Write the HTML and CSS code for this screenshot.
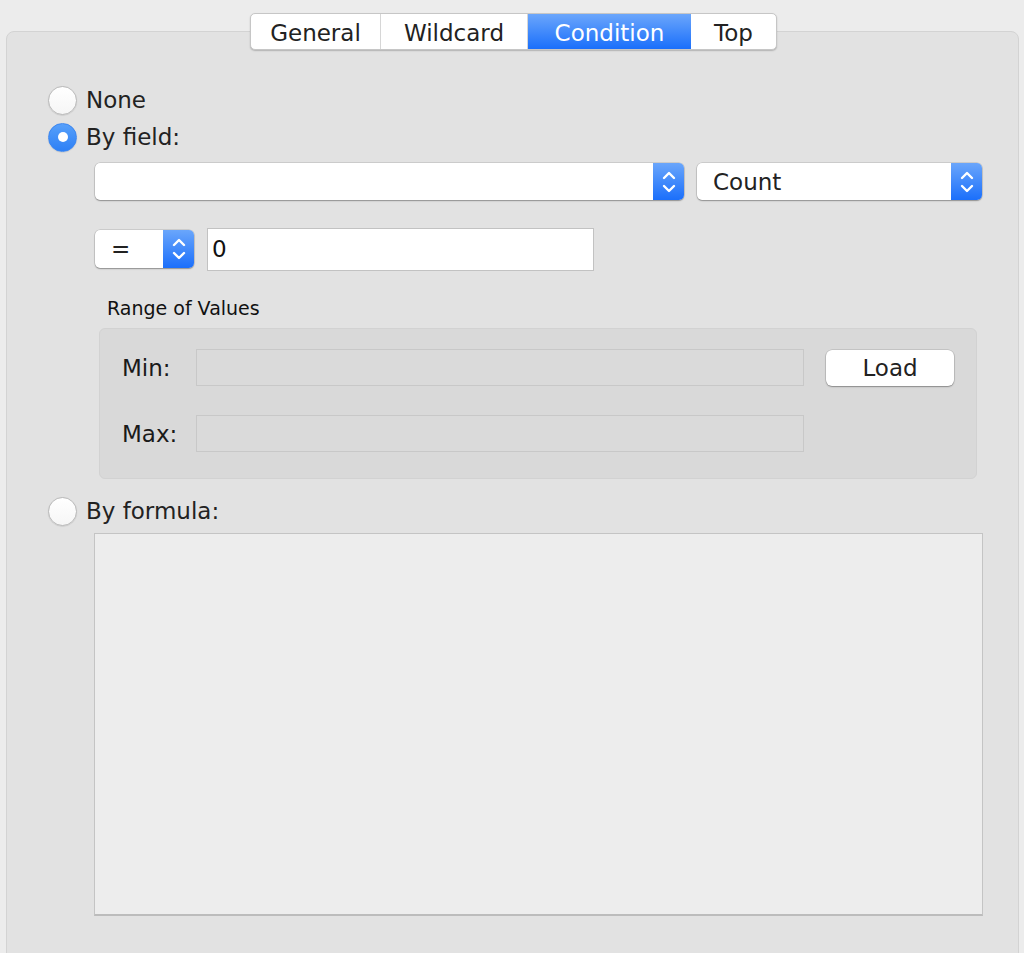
FILE: index.html
```html
<!DOCTYPE html>
<html>
<head>
<meta charset="utf-8">
<link rel="stylesheet" href="styles.css">
</head>
<body>
<div class="window">
  <div class="tabs">
    <div class="tab tab-general">General</div>
    <div class="tab tab-wildcard">Wildcard</div>
    <div class="tab tab-condition active">Condition</div>
    <div class="tab tab-top">Top</div>
  </div>
  <div class="panel">
    <div class="radio-row row-none">
      <span class="radio"></span><span class="radio-label">None</span>
    </div>
    <div class="radio-row row-field">
      <span class="radio checked"></span><span class="radio-label">By field:</span>
    </div>

    <div class="field-block">
      <div class="popup-row">
        <div class="popup popup-field">
          <span class="popup-text"></span>
          <span class="stepper"><svg width="16" height="26" viewBox="0 0 16 26"><path d="M3 9 L8 4 L13 9 M3 17 L8 22 L13 17" fill="none" stroke="#fff" stroke-width="2.4" stroke-linecap="round" stroke-linejoin="round"/></svg></span>
        </div>
        <div class="popup popup-count">
          <span class="popup-text">Count</span>
          <span class="stepper"><svg width="16" height="26" viewBox="0 0 16 26"><path d="M3 9 L8 4 L13 9 M3 17 L8 22 L13 17" fill="none" stroke="#fff" stroke-width="2.4" stroke-linecap="round" stroke-linejoin="round"/></svg></span>
        </div>
      </div>

      <div class="op-row">
        <div class="popup popup-op">
          <span class="popup-text op-text">=</span>
          <span class="stepper"><svg width="16" height="26" viewBox="0 0 16 26"><path d="M3 9 L8 4 L13 9 M3 17 L8 22 L13 17" fill="none" stroke="#fff" stroke-width="2.4" stroke-linecap="round" stroke-linejoin="round"/></svg></span>
        </div>
        <div class="textfield">0</div>
      </div>

      <div class="range-label">Range of Values</div>
      <div class="range-box">
        <div class="range-grid">
          <span class="range-name">Min:</span>
          <div class="range-field"></div>
          <div class="load-btn">Load</div>
          <span class="range-name">Max:</span>
          <div class="range-field"></div>
          <div></div>
        </div>
      </div>
    </div>

    <div class="radio-row row-formula">
      <span class="radio"></span><span class="radio-label">By formula:</span>
    </div>
    <div class="formula-area"></div>
  </div>
</div>
</body>
</html>
```

FILE: styles.css
```css
* { box-sizing: border-box; }
html, body { margin: 0; padding: 0; }
body {
  background: #ececec;
  font-family: "DejaVu Sans", "Liberation Sans", sans-serif;
  color: #222;
  width: 1024px;
  height: 953px;
  overflow: hidden;
}
.window {
  padding-top: 13px;
  padding-left: 6px;
  width: 1019px;
}
.tabs {
  position: relative;
  z-index: 2;
  display: flex;
  width: 527px;
  height: 37px;
  margin-left: 244px;
  background: #fff;
  border: 1px solid #c6c6c6;
  border-radius: 5px;
  box-shadow: 0 1px 1.5px rgba(0,0,0,0.22);
  overflow: hidden;
}
.tab {
  display: flex;
  align-items: center;
  justify-content: center;
  font-size: 23px;
  color: #222;
  border-right: 1px solid #d6d6d6;
  height: 100%;
  padding-top: 2px;
}
.tab:last-child { border-right: none; }
.tab-general { width: 130px; }
.tab-wildcard { width: 147px; }
.tab-condition { width: 163px; }
.tab-top { flex: 1; }
.tab.active {
  background: linear-gradient(#6ba6fb, #1a6ffb);
  color: #fff;
  border-right: none;
}
.panel {
  margin-top: -19px;
  height: 960px;
  background: #e2e2e2;
  border: 1px solid #d3d3d3;
  border-radius: 8px;
  padding-top: 53px;
  padding-left: 41px;
}
.radio-row {
  display: flex;
  align-items: center;
  height: 30px;
}
.row-field { margin-top: 7px; }
.row-formula { margin-top: 17px; }
.radio {
  width: 29px;
  height: 29px;
  border-radius: 50%;
  background: linear-gradient(#ffffff, #f6f6f6);
  border: 1px solid #b9b9b9;
  box-shadow: 0 0.5px 1px rgba(0,0,0,0.15);
  display: flex;
  align-items: center;
  justify-content: center;
  flex: none;
}
.radio.checked {
  background: linear-gradient(#57a0fa, #2d80f6);
  border-color: #3c86f0;
}
.radio.checked::after {
  content: "";
  width: 10px;
  height: 10px;
  border-radius: 50%;
  background: #fff;
}
.radio-label {
  font-size: 23px;
  margin-left: 9px;
  color: #222;
}
.field-block {
  padding-left: 47px;
}
.popup-row {
  display: flex;
  gap: 13px;
  margin-top: 11px;
}
.popup {
  display: flex;
  height: 37px;
  background: #fff;
  border-radius: 5px;
  box-shadow: 0 0 0 0.5px rgba(0,0,0,0.18), 0 1px 1.5px rgba(0,0,0,0.3);
  overflow: hidden;
}
.popup-field { width: 589px; }
.popup-count { width: 285px; }
.popup-text {
  flex: 1;
  display: flex;
  align-items: center;
  font-size: 23px;
  padding-left: 16px;
  color: #222;
}
.stepper {
  width: 31px;
  flex: none;
  background: linear-gradient(#6aa6fb, #1b6ffb);
  display: flex;
  align-items: center;
  justify-content: center;
}
.op-row {
  display: flex;
  align-items: center;
  gap: 13px;
  margin-top: 28px;
  height: 42px;
}
.popup-op { width: 99px; height: 38px; }
.op-text { padding-left: 16px; }
.textfield {
  width: 387px;
  height: 43px;
  background: #fff;
  border: 1px solid #c2c2c2;
  font-size: 23px;
  display: flex;
  align-items: center;
  padding-left: 4px;
  color: #111;
}
.range-label {
  font-size: 19px;
  line-height: 22px;
  margin-top: 27px;
  margin-left: 12px;
  color: #111;
}
.range-box {
  margin-top: 9px;
  margin-left: 4px;
  width: 878px;
  height: 151px;
  background: #d9d9d9;
  border: 1px solid #d2d2d2;
  border-radius: 6px;
  padding: 20px 23px 0 22px;
}
.range-grid {
  display: grid;
  grid-template-columns: 74px 630px 128px;
  row-gap: 29px;
  grid-auto-rows: 37px;
  align-items: center;
}
.range-name {
  font-size: 23px;
  color: #1a1a1a;
}
.range-field {
  width: 608px;
  height: 37px;
  background: #dadada;
  border: 1px solid #c8c8c8;
}
.load-btn {
  height: 36px;
  background: #fff;
  border-radius: 6px;
  box-shadow: 0 0 0 0.5px rgba(0,0,0,0.18), 0 1px 1.5px rgba(0,0,0,0.3);
  display: flex;
  align-items: center;
  justify-content: center;
  font-size: 23px;
  color: #222;
}
.formula-area {
  margin-top: 7px;
  margin-left: 46px;
  width: 889px;
  height: 383px;
  background: #ededed;
  border: 1px solid #c4c4c4;
  border-bottom: 2px solid #bcbcbc;
}
```
